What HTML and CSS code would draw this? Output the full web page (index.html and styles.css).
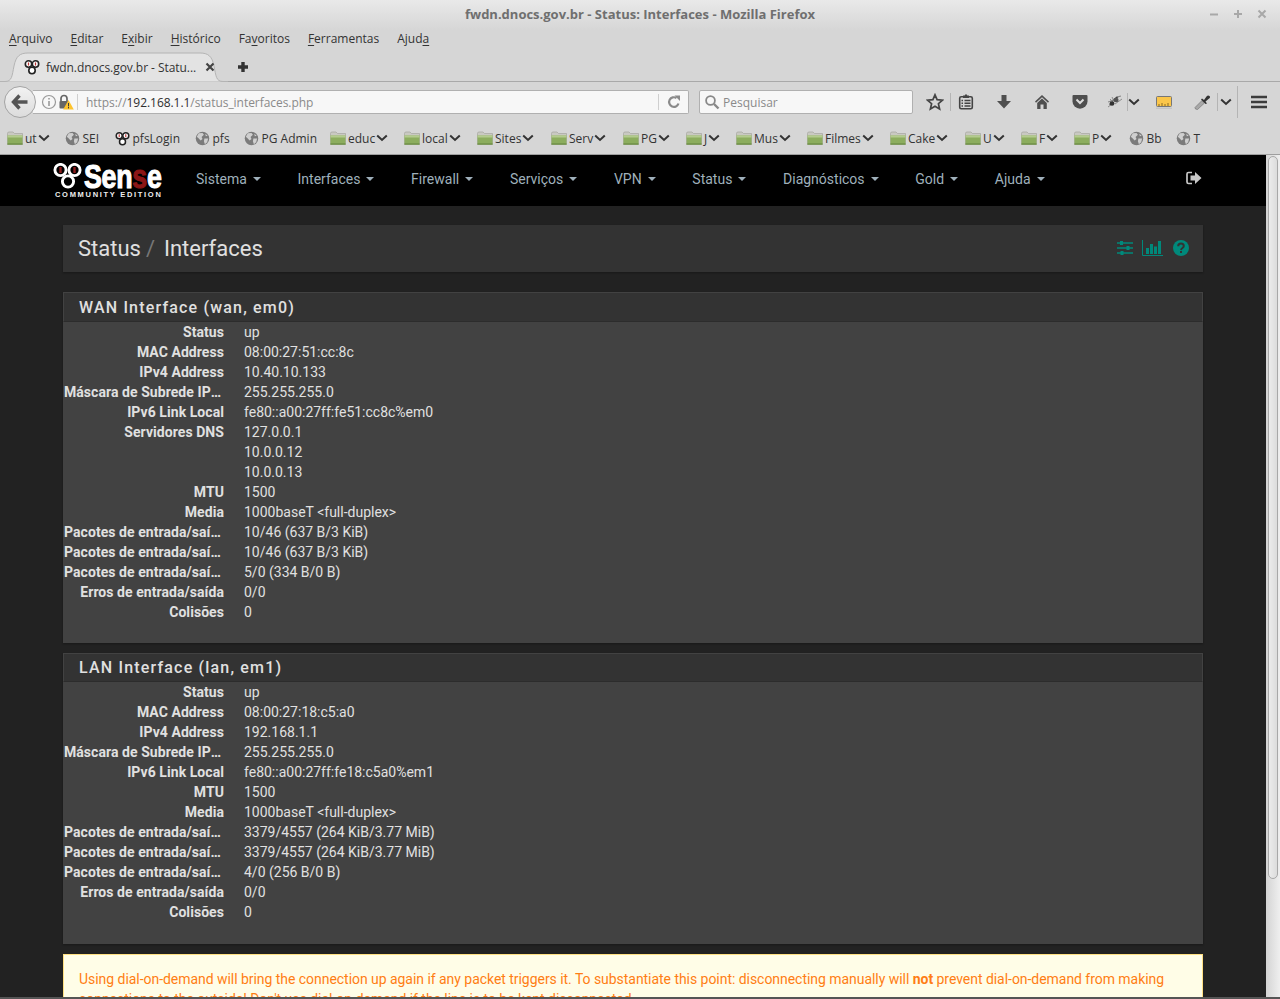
FILE: index.html
```html
<!DOCTYPE html>
<html lang="pt-BR">
<head>
<meta charset="utf-8">
<title>fwdn.dnocs.gov.br - Status: Interfaces - Mozilla Firefox</title>
<link rel="stylesheet" href="styles.css">
</head>
<body>
<svg class="defs" width="0" height="0" aria-hidden="true">
  <defs>
    <symbol id="folder" viewBox="0 0 16 14">
      <path d="M0.5 2.5 Q0.5 1 2 1 H6 L7.5 2.5 H15.5 V13.5 H0.5Z" fill="#c9c9c2" stroke="#a5a59d" stroke-width=".7"/>
      <rect x="0.5" y="4.5" width="15" height="9" fill="#8cad5e"/>
      <rect x="0.5" y="4.5" width="15" height="2" fill="#b3cb8e"/>
      <rect x="0.5" y="12.4" width="15" height="1.2" fill="#6b8c45"/>
    </symbol>
    <symbol id="globe" viewBox="0 0 16 16">
      <circle cx="8" cy="8" r="7.2" fill="#7b7b7b"/>
      <path d="M4 2.5 L8 2 L9.5 4 L7 6.5 L8 8.5 L6 10 L3 7 L1.8 6.5Z M10 8 L14 8 L13 12 L10.5 14 L9.5 11Z M11 2.8 L13.5 5 L11.5 5.5Z" fill="#cfcfcf"/>
    </symbol>
    <symbol id="chev" viewBox="0 0 12 8">
      <path d="M1.2 1.5 L6 6 L10.8 1.5" fill="none" stroke="#333" stroke-width="2"/>
    </symbol>
    <symbol id="pf" viewBox="0 0 16 16">
      <circle cx="4.5" cy="5" r="3.2" fill="#fff" stroke="#222" stroke-width="1.6"/>
      <circle cx="11.5" cy="5" r="3.2" fill="#fff" stroke="#222" stroke-width="1.6"/>
      <circle cx="8" cy="11.5" r="3.2" fill="#fff" stroke="#222" stroke-width="1.6"/>
      <rect x="3.9" y="3.5" width="1.2" height="3" fill="#b33"/>
      <rect x="10.9" y="3.5" width="1.2" height="3" fill="#b33"/>
    </symbol>
  </defs>
</svg>
<div class="window">
  <header class="chrome">
    <div class="titlebar">
      <span class="title">fwdn.dnocs.gov.br - Status: Interfaces - Mozilla Firefox</span>
      <div class="wm">
        <svg width="10" height="10" viewBox="0 0 10 10"><path d="M1 5.5H9" stroke="#a8a8a8" stroke-width="2"/></svg>
        <svg width="10" height="10" viewBox="0 0 10 10"><path d="M1 5H9M5 1V9" stroke="#a8a8a8" stroke-width="2"/></svg>
        <svg width="10" height="10" viewBox="0 0 10 10"><path d="M1.5 1.5L8.5 8.5M8.5 1.5L1.5 8.5" stroke="#a8a8a8" stroke-width="2"/></svg>
      </div>
    </div>
    <nav class="menubar">
      <span><u>A</u>rquivo</span><span><u>E</u>ditar</span><span>E<u>x</u>ibir</span><span><u>H</u>istórico</span><span>Fa<u>v</u>oritos</span><span><u>F</u>erramentas</span><span>Ajud<u>a</u></span>
    </nav>
    <div class="tabbar">
      <div class="tab">
        <svg class="tabshape" width="228" height="30" viewBox="0 0 228 30"><path d="M0 29.5 H5 C12 29.5 12 24 14 14 C16 4 20 1 28 1 H200 C208 1 212 4 214 14 C216 24 216 29.5 223 29.5 H228 V30 H0Z" fill="#e3e3e3" stroke="#b4b4b4"/></svg>
        <svg class="fav" width="16" height="16"><use href="#pf"/></svg>
        <span class="tabtitle">fwdn.dnocs.gov.br - Statu...</span>
        <svg class="tabclose" width="10" height="10" viewBox="0 0 10 10"><path d="M1.5 1.5L8.5 8.5M8.5 1.5L1.5 8.5" stroke="#444" stroke-width="2.2"/></svg>
      </div>
      <svg class="newtab" width="12" height="12" viewBox="0 0 12 12"><path d="M6 1V11M1 6H11" stroke="#333" stroke-width="3.4"/></svg>
    </div>
    <div class="navbar">
      <div class="back"><svg width="18" height="16" viewBox="0 0 18 16"><path d="M8.5 1.5L2.5 8L8.5 14.5M3 8H16.5" fill="none" stroke="#555" stroke-width="3.4"/></svg></div>
      <div class="urlbar">
        <svg class="info" width="16" height="16" viewBox="0 0 16 16"><circle cx="8" cy="8" r="6.5" fill="none" stroke="#999" stroke-width="1.2"/><path d="M8 4V5.6M8 7V12" stroke="#999" stroke-width="1.6"/></svg>
        <svg class="lock" width="16" height="16" viewBox="0 0 16 16"><path d="M3 7V4.5A3 3 0 0 1 9 4.5V7" fill="none" stroke="#666" stroke-width="1.7"/><rect x="1.5" y="7" width="9" height="7.5" rx="1" fill="#666"/><path d="M10.5 6L15.8 15.5H5.2Z" fill="#fdc32d"/><path d="M10.5 9V12.4M10.5 13V14.4" stroke="#3c3c3c" stroke-width="1"/></svg>
        <span class="sep"></span>
        <span class="url">https://<b>192.168.1.1</b>/status_interfaces.php</span>
        <span class="sep"></span>
        <svg class="reload" width="14" height="14" viewBox="0 0 14 14"><path d="M11.5 8.5A4.8 4.8 0 1 1 9.5 3" fill="none" stroke="#8a8a8a" stroke-width="2.2"/><path d="M7.5 .5H13V6Z" fill="#8a8a8a"/></svg>
      </div>
      <div class="searchbar">
        <svg width="16" height="16" viewBox="0 0 16 16"><circle cx="6.5" cy="6.5" r="4.4" fill="none" stroke="#888" stroke-width="1.8"/><path d="M10 10L14.5 14.5" stroke="#888" stroke-width="2.4"/></svg>
        <span>Pesquisar</span>
      </div>
      <div class="tools">
        <svg class="t-star" width="18" height="18" viewBox="0 0 18 18"><path d="M9 1.8L11.1 6.7L16.4 7.2L12.4 10.7L13.6 16L9 13.2L4.4 16L5.6 10.7L1.6 7.2L6.9 6.7Z" fill="none" stroke="#444" stroke-width="1.7"/></svg>
        <span class="t-sep t-sep1"></span>
        <svg class="t-clip" width="16" height="16" viewBox="0 0 16 16"><path d="M5 1.500H6.500L8 0L9.500 1.500H11V4H5Z" fill="#444"/><rect x="1.700" y="2.700" width="12.600" height="12" rx="1.500" fill="none" stroke="#444" stroke-width="1.600"/><path d="M3.500 6.500H5M6.500 6.500H12.500M3.500 9.300H5M6.500 9.300H12.500M3.500 12.100H5M6.500 12.100H12.500" stroke="#444" stroke-width="1.500"/></svg>
        <svg class="t-down" width="16" height="16" viewBox="0 0 16 16"><path d="M5.500 1H10.500V7H15L8 14.500L1 7H5.500Z" fill="#4f4f4f"/></svg>
        <svg class="t-home" width="16" height="16" viewBox="0 0 16 16"><path d="M8 1L1 7.600L2 8.700L8 3.200L14 8.700L15 7.600Z M3.200 8.900L8 4.600L12.800 8.900V15H9.500V10.500H6.500V15H3.200Z" fill="#4f4f4f"/></svg>
        <svg class="t-pocket" width="16" height="16" viewBox="0 0 16 16"><path d="M1.500 1H14.500Q15.500 1 15.500 2V7.500A7.500 7.200 0 0 1 .5 7.500V2Q.5 1 1.500 1Z" fill="#4f4f4f"/><path d="M4.500 5.500L8 9L11.500 5.500" fill="none" stroke="#ddd" stroke-width="2"/></svg>
        <svg class="t-bug" width="16" height="14" viewBox="0 0 16 14"><path d="M1 7L6 5.500L9 2L14 1M2 10L6 7M8 9L15 4M5 2L7 6M3 4L7 8M1 12L5 9" stroke="#8c8c8c" stroke-width="1"/><ellipse cx="5" cy="8.500" rx="2.400" ry="2.200" fill="#333"/><ellipse cx="9" cy="5" rx="2.600" ry="2.200" fill="#555"/></svg>
        <span class="t-sep t-sep2"></span>
        <svg class="t-chev1" width="12" height="8"><use href="#chev"/></svg>
        <svg class="t-ruler" width="16" height="13" viewBox="0 0 16 13"><rect x=".5" y=".5" width="15" height="10" rx="1" fill="#fbc64a" stroke="#777"/><path d="M3 10V8M6 10V7M9 10V8M12 10V7" stroke="#8a6a20"/><rect y="11.500" width="16" height="1.500" fill="#c5c5c5"/></svg>
        <svg class="t-drop" width="17" height="16" viewBox="0 0 17 16"><path d="M1.500 15L1 13.500L8 6.500L10.500 9L3.500 15.500Z" fill="#a8a8a8" stroke="#777" stroke-width=".7"/><path d="M8 4.500L10 6L12.500 2.500Q14 .6 15.500 2T14.500 5L11.500 7.500L13 9.500L11.500 10L7 5.500Z" fill="#333"/></svg>
        <span class="t-sep t-sep3"></span>
        <svg class="t-chev2" width="12" height="8"><use href="#chev"/></svg>
        <span class="t-sep t-sep4"></span>
        <svg class="t-menu" width="16" height="14" viewBox="0 0 16 14"><path d="M0 2H16M0 7H16M0 12H16" stroke="#3c3c3c" stroke-width="2.600"/></svg>
      </div>
    </div>
    <div class="bookmarks">
      <span class="bm"><svg class="fo"><use href="#folder"/></svg>ut<svg class="ch"><use href="#chev"/></svg></span>
      <span class="bm"><svg class="gl"><use href="#globe"/></svg>SEI</span>
      <span class="bm"><svg class="gl"><use href="#pf"/></svg>pfsLogin</span>
      <span class="bm"><svg class="gl"><use href="#globe"/></svg>pfs</span>
      <span class="bm"><svg class="gl"><use href="#globe"/></svg>PG Admin</span>
      <span class="bm"><svg class="fo"><use href="#folder"/></svg>educ<svg class="ch"><use href="#chev"/></svg></span>
      <span class="bm"><svg class="fo"><use href="#folder"/></svg>local<svg class="ch"><use href="#chev"/></svg></span>
      <span class="bm"><svg class="fo"><use href="#folder"/></svg>Sites<svg class="ch"><use href="#chev"/></svg></span>
      <span class="bm"><svg class="fo"><use href="#folder"/></svg>Serv<svg class="ch"><use href="#chev"/></svg></span>
      <span class="bm"><svg class="fo"><use href="#folder"/></svg>PG<svg class="ch"><use href="#chev"/></svg></span>
      <span class="bm"><svg class="fo"><use href="#folder"/></svg>J<svg class="ch"><use href="#chev"/></svg></span>
      <span class="bm"><svg class="fo"><use href="#folder"/></svg>Mus<svg class="ch"><use href="#chev"/></svg></span>
      <span class="bm"><svg class="fo"><use href="#folder"/></svg>Filmes<svg class="ch"><use href="#chev"/></svg></span>
      <span class="bm"><svg class="fo"><use href="#folder"/></svg>Cake<svg class="ch"><use href="#chev"/></svg></span>
      <span class="bm"><svg class="fo"><use href="#folder"/></svg>U<svg class="ch"><use href="#chev"/></svg></span>
      <span class="bm"><svg class="fo"><use href="#folder"/></svg>F<svg class="ch"><use href="#chev"/></svg></span>
      <span class="bm"><svg class="fo"><use href="#folder"/></svg>P<svg class="ch"><use href="#chev"/></svg></span>
      <span class="bm"><svg class="gl"><use href="#globe"/></svg>Bb</span>
      <span class="bm"><svg class="gl"><use href="#globe"/></svg>T</span>
    </div>
  </header>
  <div class="viewport">
    <main class="page">
      <nav class="topnav">
        <div class="logo">
          <svg class="logomark" width="30" height="26" viewBox="0 0 30 26">
            <g fill="none" stroke="#fff" stroke-width="2.900"><circle cx="7.500" cy="7" r="5.600"/><circle cx="21.500" cy="7" r="5.600"/><circle cx="15" cy="18.500" r="5.600"/></g>
            <rect x="6.300" y="4" width="2.400" height="6" fill="#8c1b1b"/><rect x="20.300" y="4" width="2.400" height="6" fill="#8c1b1b"/>
          </svg>
          <span class="sense">Sen<i>s</i>e</span>
          <span class="edition">COMMUNITY EDITION</span>
        </div>
        <ul class="menu">
          <li>Sistema<b></b></li><li>Interfaces<b></b></li><li>Firewall<b></b></li><li>Serviços<b></b></li><li>VPN<b></b></li><li>Status<b></b></li><li>Diagnósticos<b></b></li><li>Gold<b></b></li><li>Ajuda<b></b></li>
        </ul>
        <svg class="logout" width="16" height="14" viewBox="0 0 16 14"><path d="M6 1.500H2.500Q1 1.500 1 3V11Q1 12.500 2.500 12.500H6" fill="none" stroke="#c8c8c8" stroke-width="1.700"/><path d="M4.500 4.500H9V1L15.500 7L9 13V9.500H4.500Z" fill="#c8c8c8"/></svg>
      </nav>
      <div class="container">
        <div class="pagehead">
          <h1><span>Status</span><i>/</i><span>Interfaces</span></h1>
          <div class="headicons">
            <svg width="16" height="14" viewBox="0 0 16 14"><path d="M0 2H16M0 7H16M0 12H16" stroke="#00897b" stroke-width="1.400"/><rect x="3" y="0" width="3" height="4" fill="#00897b"/><rect x="9.500" y="5" width="3" height="4" fill="#00897b"/><rect x="3.500" y="10" width="3" height="4" fill="#00897b"/></svg>
            <svg width="21" height="16" viewBox="0 0 21 16"><path d="M.5 0V15.500H21" fill="none" stroke="#00897b"/><rect x="4" y="8" width="3" height="6" fill="#00897b"/><rect x="8" y="4" width="3" height="10" fill="#00897b"/><rect x="12" y="6.500" width="3" height="7.500" fill="#00897b"/><rect x="16" y="1" width="3" height="13" fill="#00897b"/></svg>
            <svg class="help" width="16" height="16" viewBox="0 0 16 16"><circle cx="8" cy="8" r="8" fill="#00897b"/><path d="M5.200 6.200Q5.200 3.500 8 3.500T10.800 6Q10.800 7.200 9.500 8T8 10" fill="none" stroke="#333" stroke-width="2"/><rect x="7" y="11" width="2" height="2" fill="#333"/></svg>
          </div>
        </div>
        <section class="panel">
          <h2>WAN Interface (wan, em0)</h2>
          <dl class="rows">
            <dt>Status</dt><dd>up</dd>
            <dt>MAC Address</dt><dd>08:00:27:51:cc:8c</dd>
            <dt>IPv4 Address</dt><dd>10.40.10.133</dd>
            <dt>Máscara de Subrede IPv4</dt><dd>255.255.255.0</dd>
            <dt>IPv6 Link Local</dt><dd>fe80::a00:27ff:fe51:cc8c%em0</dd>
            <dt>Servidores DNS</dt><dd>127.0.0.1<br>10.0.0.12<br>10.0.0.13</dd>
            <dt>MTU</dt><dd>1500</dd>
            <dt>Media</dt><dd>1000baseT &lt;full-duplex&gt;</dd>
            <dt>Pacotes de entrada/saída</dt><dd>10/46 (637 B/3 KiB)</dd>
            <dt>Pacotes de entrada/saída</dt><dd>10/46 (637 B/3 KiB)</dd>
            <dt>Pacotes de entrada/saída</dt><dd>5/0 (334 B/0 B)</dd>
            <dt>Erros de entrada/saída</dt><dd>0/0</dd>
            <dt>Colisões</dt><dd>0</dd>
          </dl>
        </section>
        <section class="panel panel-lan">
          <h2>LAN Interface (lan, em1)</h2>
          <dl class="rows">
            <dt>Status</dt><dd>up</dd>
            <dt>MAC Address</dt><dd>08:00:27:18:c5:a0</dd>
            <dt>IPv4 Address</dt><dd>192.168.1.1</dd>
            <dt>Máscara de Subrede IPv4</dt><dd>255.255.255.0</dd>
            <dt>IPv6 Link Local</dt><dd>fe80::a00:27ff:fe18:c5a0%em1</dd>
            <dt>MTU</dt><dd>1500</dd>
            <dt>Media</dt><dd>1000baseT &lt;full-duplex&gt;</dd>
            <dt>Pacotes de entrada/saída</dt><dd>3379/4557 (264 KiB/3.77 MiB)</dd>
            <dt>Pacotes de entrada/saída</dt><dd>3379/4557 (264 KiB/3.77 MiB)</dd>
            <dt>Pacotes de entrada/saída</dt><dd>4/0 (256 B/0 B)</dd>
            <dt>Erros de entrada/saída</dt><dd>0/0</dd>
            <dt>Colisões</dt><dd>0</dd>
          </dl>
        </section>
        <div class="alert">Using dial-on-demand will bring the connection up again if any packet triggers it. To substantiate this point: disconnecting manually will <strong>not</strong> prevent dial-on-demand from making connections to the outside! Don't use dial-on-demand if the line is to be kept disconnected.</div>
      </div>
    </main>
    <div class="scrollbar"><div class="thumb"></div></div>
  </div>
  <div class="bottomline"></div>
</div>
</body>
</html>
```
FILE: styles.css
```css
* { box-sizing: border-box; }
html, body { margin: 0; padding: 0; height: 999px; overflow: hidden; }
body { font-family: "Open Sans", "Noto Sans", sans-serif; background: #222; }
.defs { position: absolute; }
.window { width: 1280px; height: 999px; display: flex; flex-direction: column; overflow: hidden; }

.chrome { height: 155px; flex: none; background: linear-gradient(#e9e9e9 0, #d6d6d6 30px, #d6d6d6 100%); color: #3c3c3c; border-bottom: 1px solid #9e9e9e; font-size: 12px; }

.titlebar { height: 28px; position: relative; display: flex; justify-content: center; align-items: center; }
.title { font-weight: 700; font-size: 13px; color: #6f6f6f; }
.wm { position: absolute; right: 13px; top: 9px; display: flex; gap: 14px; }

.menubar { height: 24px; display: flex; align-items: center; padding: 0 0 4px 9px; gap: 18px; font-size: 12px; color: #333; }
.menubar u { text-underline-offset: 2px; }

.tabbar { height: 30px; display: flex; align-items: center; border-bottom: 1px solid #a9a9a9; position: relative; }
.tab { position: relative; width: 228px; height: 30px; margin-top: 1px; display: flex; align-items: center; padding-left: 24px; }
.tabshape { position: absolute; left: 0; top: 0; }
.fav, .tabtitle, .tabclose { position: relative; }
.tabtitle { margin-left: 6px; width: 155px; white-space: nowrap; overflow: hidden; font-size: 12px; color: #333; letter-spacing: -.05px; }
.tabclose { margin-left: 4px; }
.newtab { margin-left: 9px; }

.navbar { height: 40px; display: flex; align-items: center; position: relative; padding-left: 33px; }
.back { position: absolute; left: 4px; top: 4px; width: 32px; height: 32px; border-radius: 50%; background: linear-gradient(#f2f2f2, #dcdcdc); border: 1px solid #a4a4a4; display: flex; align-items: center; justify-content: center; }
.urlbar { width: 656px; height: 24px; margin-right: 10px; background: #f7f7f7; border: 1px solid #b0b0b0; border-left: 0; border-radius: 0 2px 2px 0; display: flex; align-items: center; padding-left: 8px; }
.lock { margin-left: 1px; }
.sep { width: 1px; height: 16px; background: #cfcfcf; margin-left: 3px; flex: none; }
.url { margin-left: 8px; width: 569px; font-size: 12px; color: #8a8a8a; white-space: nowrap; flex: none; letter-spacing: -.05px; }
.url b { font-weight: 400; color: #2e2e2e; }
.reload { margin-left: 8px; }
.searchbar { width: 214px; height: 24px; background: #f7f7f7; border: 1px solid #b0b0b0; border-radius: 2px; display: flex; align-items: center; padding-left: 4px; gap: 3px; font-size: 12px; color: #8a8a8a; }
.tools { display: flex; align-items: center; margin-left: 13px; }
.t-sep { width: 1px; height: 18px; background: #b4b4b4; flex: none; }
.t-sep1 { margin-left: 6px; }
.t-clip { margin-left: 7px; }
.t-down, .t-home, .t-pocket { margin-left: 22px; }
.t-bug { margin-left: 19px; }
.t-sep2 { margin-left: 4px; }
.t-ruler { margin-left: 16px; }
.t-drop { margin-left: 22px; }
.t-sep3 { margin-left: 6px; }
.t-chev2 { margin-left: 2px; }
.t-sep4 { height: 32px; margin-left: 5px; }
.t-menu { margin-left: 13px; }

.bookmarks { height: 32px; display: grid; grid-template-columns: 58px 50px 80px 49px 86px 74px 73px 74px 72px 63px 50px 71px 83px 75px 56px 53px 55px 47px 60px; padding-left: 7px; align-items: center; font-size: 12px; color: #333; }
.bm { display: flex; align-items: center; white-space: nowrap; }
.fo { width: 16px; height: 14px; margin-right: 2px; flex: none; }
.gl { width: 15px; height: 15px; margin-right: 2.500px; flex: none; }
.ch { width: 12px; height: 8px; margin-left: 1px; flex: none; }

.viewport { flex: 1; min-height: 0; display: flex; }
.page { flex: 1; min-width: 0; background: #222; overflow: hidden; font-family: Roboto, sans-serif; font-size: 14px; }
.scrollbar { width: 14px; flex: none; background: linear-gradient(90deg, #d4d4d4, #efefef); padding: 1px 2px 0 2px; }
.thumb { height: 723px; border-radius: 6px; background: linear-gradient(90deg, #ececec, #dcdcdc); border: 1px solid #a8a8a8; }
.bottomline { height: 2px; flex: none; background: #555; }

.topnav { height: 51px; background: #000; display: flex; align-items: center; position: relative; padding-left: 53px; }
.logo { position: relative; width: 124px; height: 51px; flex: none; }
.logomark { position: absolute; left: 0; top: 8px; }
.sense { position: absolute; left: 31px; top: 8px; font-family: "Liberation Sans", sans-serif; font-weight: 700; font-size: 33px; line-height: 28px; color: #fff; letter-spacing: -.3px; -webkit-text-stroke: 1.100px #fff; transform: scaleX(.81); transform-origin: left center; }
.sense i { font-style: normal; color: #8c1616; -webkit-text-stroke: 1.100px #8c1616; }
.edition { position: absolute; left: 2px; top: 36px; font-family: "Liberation Sans", sans-serif; font-weight: 700; font-size: 7.500px; line-height: 7px; letter-spacing: 1.700px; color: #eee; white-space: nowrap; }
.menu { list-style: none; margin: 0 0 4px 19px; padding: 0; display: flex; color: #9fb0bb; }
.menu li { padding-right: 36.700px; white-space: nowrap; display: flex; align-items: center; }
.menu b { width: 0; height: 0; border-left: 4px solid transparent; border-right: 4px solid transparent; border-top: 4px solid #9fb0bb; margin-left: 6px; }
.logout { position: absolute; right: 64px; top: 16px; }

.container { width: 1140px; margin-left: 63px; padding-top: 19px; }
.pagehead { height: 47px; background: #333; display: flex; align-items: center; justify-content: space-between; padding: 0 14px 2px 15px; box-shadow: 0 1px 2px rgba(0,0,0,.3); margin-bottom: 20px; }
.pagehead h1 { margin: 2px 0 0; font-size: 22px; font-weight: 400; color: #e0e0e0; display: flex; }
.pagehead i { font-style: normal; color: #777; margin: 0 9px 0 5px; }
.headicons { display: flex; align-items: center; gap: 9px; }
.help { margin-left: 1px; }

.panel { background: #424242; margin-bottom: 10px; padding-bottom: 21px; box-shadow: 0 1px 2px rgba(0,0,0,.3); }
.panel h2 { margin: 0; height: 30px; background: #333; border: 1px solid #424242; border-bottom-color: #2c2c2c; padding-left: 15px; font-size: 16px; font-weight: 500; line-height: 30px; letter-spacing: 1.180px; color: #e0e0e0; }
.panel-lan { padding-bottom: 22px; }
.panel-lan h2 { height: 29px; line-height: 28px; }
.rows { margin: 0; padding-left: 1px; display: grid; grid-template-columns: 160px 1fr; column-gap: 20px; line-height: 20px; color: #e0e0e0; }
.rows dt { font-weight: 700; text-align: right; white-space: nowrap; overflow: hidden; text-overflow: ellipsis; letter-spacing: .06px; }
.rows dd { margin: 0; }

.alert { background: #fffde7; border: 1px solid #ffe082; border-width: 1px 1px 0; padding: 14px 15px; line-height: 20px; color: #ff7d14; letter-spacing: -.042px; }
.alert strong { font-weight: 700; }
```
